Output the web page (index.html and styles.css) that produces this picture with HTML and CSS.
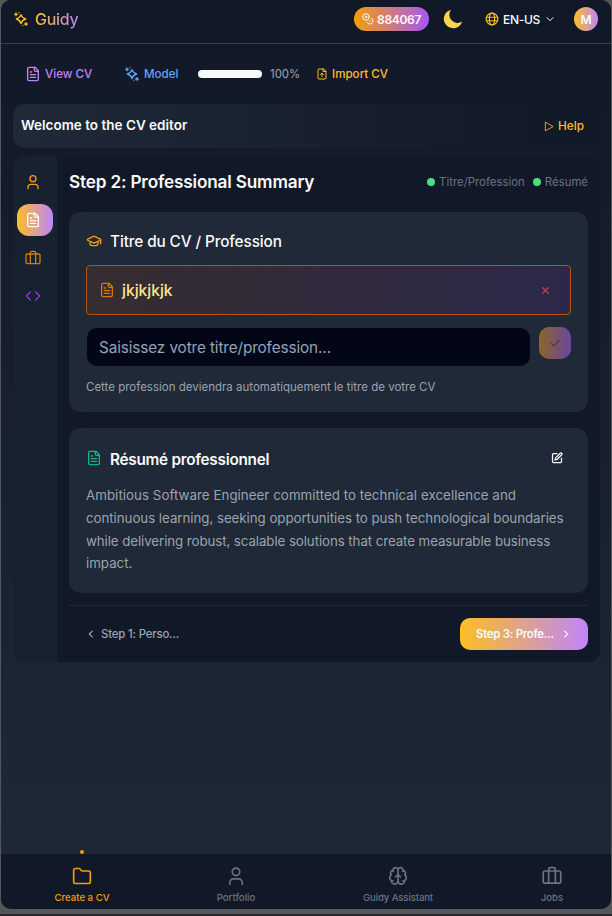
FILE: index.html
```html
<!DOCTYPE html>
<html lang="en">
<head>
<meta charset="utf-8">
<title>Guidy</title>
<link rel="stylesheet" href="styles.css">
</head>
<body>
<svg class="defs" width="0" height="0">
  <defs>
    <symbol id="file" viewBox="0 0 24 24"><path d="M15 2H6a2 2 0 0 0-2 2v16a2 2 0 0 0 2 2h12a2 2 0 0 0 2-2V7Z"/><path d="M14 2v4a2 2 0 0 0 2 2h4M10 9H8M16 13H8M16 17H8"/></symbol>
    <symbol id="sparkles" viewBox="0 0 24 24"><path d="M12 5.500Q13.500 10.500 19 12 13.500 13.500 12 19 10.500 13.500 5 12 10.500 10.500 12 5.500ZM4.500 3v4M2.500 5h4M19.500 17.500v4M17.500 19.500h4M9 2.500v.01M15 21.500v.01"/></symbol>
    <symbol id="user" viewBox="0 0 24 24"><circle cx="12" cy="7" r="4.500"/><path d="M19.500 22v-2a4.500 4.500 0 0 0-4.500-4.500H9A4.500 4.500 0 0 0 4.500 20v2"/></symbol>
    <symbol id="case" viewBox="0 0 24 24"><path d="M16 20V4a2 2 0 0 0-2-2h-4a2 2 0 0 0-2 2v16"/><rect x="1.500" y="6" width="21" height="14.500" rx="2"/></symbol>
  </defs>
</svg>
<div class="app">
  <header class="header">
    <div class="brand"><svg class="icon i16"><use href="#sparkles"/></svg><span class="brand-name">Guidy</span></div>
    <div class="header-tools">
      <div class="coins"><svg class="icon i12" viewBox="0 0 24 24"><circle cx="8" cy="8" r="6.500"/><circle cx="8" cy="8" r="1.500"/><path d="M19.500 10.500A6.500 6.500 0 1 1 10 19M16.500 14.500l.7.700-2 2"/></svg><span class="coins-value">884067</span></div>
      <svg class="moon" viewBox="0 0 20 20"><path d="M8 .7A9.400 9.400 0 1 0 19.200 12.600 8.300 8.300 0 0 1 8 .7Z"/></svg>
      <div class="language"><svg class="icon globe" viewBox="0 0 24 24"><circle cx="12" cy="12" r="10"/><ellipse cx="12" cy="12" rx="4.500" ry="10"/><path d="M2.500 9h19M2.500 15h19"/></svg><span class="language-name">EN-US</span><svg class="icon i8" viewBox="0 0 24 24"><path d="m3 8 9 9 9-9"/></svg></div>
      <div class="avatar">M</div>
    </div>
  </header>
  <div class="toolbar">
    <div class="tool view"><svg class="icon i16"><use href="#file"/></svg><span class="t-view">View CV</span></div>
    <div class="tool model"><svg class="icon i16"><use href="#sparkles"/></svg><span class="t-model">Model</span></div>
    <div class="progress"></div><span class="percent">100%</span>
    <div class="tool import"><svg class="icon i12" viewBox="0 0 24 24"><path d="M15 2H6a2 2 0 0 0-2 2v16a2 2 0 0 0 2 2h12a2 2 0 0 0 2-2V7ZM14 2v5h6M12 17v-6M9 13l3-3 3 3"/></svg><span class="t-import">Import CV</span></div>
  </div>
  <section class="banner"><span class="welcome">Welcome to the CV editor</span><div class="help"><svg class="icon play" viewBox="0 0 24 24"><path d="M4 2 22 12 4 22Z"/></svg><span class="t-help">Help</span></div></section>
  <main class="editor">
    <aside class="rail">
      <div class="rail-item amber"><svg class="icon i16"><use href="#user"/></svg></div>
      <div class="rail-item active"><svg class="icon i16"><use href="#file"/></svg></div>
      <div class="rail-item orange"><svg class="icon i16"><use href="#case"/></svg></div>
      <div class="rail-item purple"><svg class="icon i16" viewBox="0 0 24 24"><path d="m16 18 6-6-6-6M8 6l-6 6 6 6"/></svg></div>
    </aside>
    <div class="content">
      <div class="step-head"><h1 class="step-title">Step 2: Professional Summary</h1>
        <div class="checks"><i class="dot"></i><span class="check-a">Titre/Profession</span><i class="dot second"></i><span class="check-b">Résumé</span></div></div>
      <section class="card title-card">
        <div class="card-head amber"><svg class="icon i16" viewBox="0 0 24 24"><path d="M21.400 10.900a1 1 0 0 0 0-1.800l-8.600-3.900a2 2 0 0 0-1.700 0L2.600 9.100a1 1 0 0 0 0 1.800l8.600 3.900a2 2 0 0 0 1.700 0ZM22 10v6M6 12.500V16c0 4 12 4 12 0v-3.500"/></svg><h2 class="h-title">Titre du CV / Profession</h2></div>
        <div class="tag"><svg class="icon i16"><use href="#file"/></svg><span class="tag-name">jkjkjkjk</span><svg class="icon close" viewBox="0 0 24 24"><path d="M4 4l16 16M20 4 4 20"/></svg></div>
        <div class="entry"><div class="input"><span class="placeholder">Saisissez votre titre/profession...</span></div><div class="confirm"><svg class="icon i12" viewBox="0 0 24 24"><path d="m4 13 5 5L20 7"/></svg></div></div>
        <p class="hint"><span class="t-hint">Cette profession deviendra automatiquement le titre de votre CV</span></p>
      </section>
      <section class="card summary-card">
        <div class="card-head green"><svg class="icon i16"><use href="#file"/></svg><h2 class="h-summary">Résumé professionnel</h2><svg class="icon edit" viewBox="0 0 24 24"><path d="M12 3H5a2 2 0 0 0-2 2v14a2 2 0 0 0 2 2h14a2 2 0 0 0 2-2v-7M18.400 2.600a2.100 2.100 0 0 1 3 3l-9 9L8 16l1.300-4.300Z"/></svg></div>
        <p class="summary"><span class="l1">Ambitious Software Engineer committed to technical excellence and</span><br><span class="l2">continuous learning, seeking opportunities to push technological boundaries</span><br><span class="l3">while delivering robust, scalable solutions that create measurable business</span><br><span class="l4">impact.</span></p>
      </section>
      <footer class="steps">
        <div class="prev"><svg class="icon i10" viewBox="0 0 24 24"><path d="m15 19-7-7 7-7"/></svg><span class="t-prev">Step 1: Perso...</span></div>
        <div class="next"><span class="t-next">Step 3: Profe...</span><svg class="icon i10" viewBox="0 0 24 24"><path d="m9 5 7 7-7 7"/></svg></div>
      </footer>
    </div>
  </main>
  <nav class="nav">
    <div class="nav-item current"><svg class="icon i20" viewBox="0 0 24 24"><path d="M20 21a2 2 0 0 0 2-2V8a2 2 0 0 0-2-2h-8L9 3H4a2 2 0 0 0-2 2v14a2 2 0 0 0 2 2Z"/></svg><span class="n1">Create a CV</span></div>
    <div class="nav-item"><svg class="icon i20"><use href="#user"/></svg><span class="n2">Portfolio</span></div>
    <div class="nav-item"><svg class="icon i20" viewBox="0 0 24 24"><path d="M12 5a3 3 0 1 0-6 .1 4 4 0 0 0-2.500 5.800 4 4 0 0 0 .5 6.600A4 4 0 1 0 12 18ZM12 5a3 3 0 1 1 6 .1 4 4 0 0 1 2.500 5.800 4 4 0 0 1-.5 6.600A4 4 0 1 1 12 18ZM15 13a4.500 4.500 0 0 1-3-4 4.500 4.500 0 0 1-3 4M17.600 6.500a3 3 0 0 0 .4-1.400M6 5.100a3 3 0 0 0 .4 1.400M3.500 10.900l.5-.4M20 10.500l.5.4M6 18a4 4 0 0 1-2-.5M20 17.500a4 4 0 0 1-2 .5"/></svg><span class="n3">Guidy Assistant</span></div>
    <div class="nav-item"><svg class="icon i20"><use href="#case"/></svg><span class="n4">Jobs</span></div>
  </nav>
</div>
</body>
</html>
```
FILE: styles.css
```css
* { box-sizing: border-box; }
body { margin: 0; width: 612px; height: 916px; overflow: hidden; background: linear-gradient(#55565a 0 914px, #25272b 914px); font-family: Inter, "Open Sans", sans-serif; color: #f9fafb; }
h1, h2, p { margin: 0; font-weight: 600; }
span, h1, h2 { white-space: nowrap; }
.defs { position: absolute; }
.icon { fill: none; stroke: currentColor; stroke-width: 2; stroke-linecap: round; stroke-linejoin: round; flex: none; }
.i8 { width: 8px; height: 8px; stroke-width: 3; }
.i10 { width: 10px; height: 10px; stroke-width: 3; }
.i12 { width: 12px; height: 12px; }
.i16 { width: 16px; height: 16px; }
.i20 { width: 20px; height: 20px; }
.app { display: flex; flex-direction: column; width: 610px; height: 909px; margin-left: 1px; border-radius: 10px; overflow: hidden; background: linear-gradient(#111827, #1f2937); }
.header { display: flex; justify-content: space-between; align-items: center; flex: none; height: 44px; padding: 0 13px 5px 12px; background: #111827; border-bottom: 1px solid #374151; }
.brand { display: flex; align-items: center; gap: 6px; color: #fbbf24; }
.brand-name { font-size: 16px; letter-spacing: -.3px; font-weight: 500; background: linear-gradient(90deg, #fbbf24, #c084fc); background-clip: text; color: transparent; }
.header-tools { display: flex; align-items: center; }
.coins { display: flex; align-items: center; gap: 3px; width: 75px; height: 24px; padding-left: 8px; border-radius: 12px; background: linear-gradient(90deg, #f59e0b, #a855f7); }
.coins-value { font-size: 12px; letter-spacing: -.3px; font-weight: 600; }
.moon { width: 20px; height: 20px; margin-left: 14px; fill: #fcd34d; }
.language { display: flex; align-items: center; margin-left: 22px; width: 69px; }
.globe { width: 14px; height: 14px; color: #fbbf24; margin-right: 4px; }
.language-name { width: 43px; font-size: 12px; letter-spacing: -.3px; font-weight: 500; }
.avatar { display: flex; align-items: center; justify-content: center; width: 24px; height: 24px; margin-left: 20px; border-radius: 50%; background: linear-gradient(90deg, #fbbf24, #c084fc); font-size: 12px; font-weight: 600; }
.toolbar { display: flex; align-items: center; flex: none; height: 60px; padding-left: 24px; font-size: 11.600px; font-weight: 500; }
.tool { display: flex; align-items: center; gap: 4px; }
.view { width: 99px; color: #c084fc; }
.model { width: 74px; color: #60a5fa; }
.progress { width: 64px; height: 8px; border-radius: 4px; background: #f8fafc; }
.percent { margin-left: 8px; width: 46px; color: #9ca3af; font-size: 11.400px; font-weight: 400; }
.import { color: #fbbf24; }
.banner { display: flex; align-items: center; justify-content: space-between; flex: none; height: 44px; margin: 0 11px 8px 12px; padding: 0 16px 0 8px; border-radius: 12px; background: linear-gradient(90deg, #1f2937, #111827); }
.welcome { font-size: 13.500px; font-weight: 600; padding-bottom: 2px; }
.help { display: flex; align-items: center; gap: 4px; color: #fbbf24; font-size: 11.800px; font-weight: 500; }
.play { width: 10px; height: 11px; }
.editor { display: flex; flex: none; height: 506px; margin: 0 11px 0 12px; border-radius: 12px; overflow: hidden; background: #111827; }
.rail { display: flex; flex-direction: column; gap: 6px; width: 44px; padding: 10px 4px; background: #18212f; }
.rail-item { display: flex; align-items: center; justify-content: center; width: 36px; height: 32px; padding-right: 4px; border-radius: 12px; }
.active { background: linear-gradient(90deg, #fbbf24, #c084fc); color: #fff; }
.amber { color: #f59e0b; }
.orange { color: #d97706; }
.purple { color: #9333ea; }
.green { color: #10b981; }
.content { flex: 1; padding: 0 12px; }
.step-head { display: flex; align-items: center; justify-content: space-between; height: 56px; padding-bottom: 4px; }
.step-title { padding-bottom: 1px; font-size: 17.200px; letter-spacing: -.170px; }
.checks { display: flex; align-items: center; font-size: 11.400px; color: #6b7280; }
.dot { width: 8px; height: 8px; border-radius: 50%; margin-right: 4px; background: #4ade80; }
.second { margin-left: 8px; }
.card { padding: 17px; border-radius: 12px; background: #1f2937; }
.title-card { height: 200px; margin-bottom: 16px; }
.summary-card { height: 165px; margin-bottom: 12px; }
.card-head { display: flex; align-items: center; gap: 8px; height: 24px; }
.card-head h2 { font-size: 15.300px; color: #f9fafb; }
.card-head .h-title { font-weight: 500; letter-spacing: -.1px; }
.card-head .h-summary { padding-top: 2px; letter-spacing: -.260px; }
.summary-card .card-head { height: 26px; }
.edit { width: 12px; height: 12px; margin-left: auto; margin-right: 8px; color: #f9fafb; stroke-width: 2.500; }
.tag { display: flex; align-items: center; gap: 7px; height: 50px; margin-top: 12px; padding: 0 20px 0 12px; border: 1px solid #b45309; border-radius: 4px; background: linear-gradient(90deg, #352d30, #2d284a); color: #d97706; }
.tag-name { font-size: 15.600px; font-weight: 500; color: #fde68a; }
.close { width: 9px; height: 9px; margin-left: auto; color: #dc3545; stroke-width: 3; }
.entry { display: flex; gap: 9px; margin-top: 12px; padding-left: 1px; }
.input { display: flex; align-items: center; width: 443px; height: 38px; margin-top: 1px; padding: 1px 0 0 12px; border-radius: 10px; background: #020617; }
.placeholder { font-size: 15.300px; letter-spacing: -.110px; color: #94a3b8; }
.confirm { display: flex; align-items: center; justify-content: center; width: 32px; height: 32px; border-radius: 10px; background: linear-gradient(90deg, #8d6526, #6b46a0); color: #1f2937; }
.hint { height: 16px; line-height: 16px; margin-top: 13px; font-size: 11.500px; font-weight: 400; color: #9ca3af; }
.summary { margin-top: 13px; font-size: 13.300px; font-weight: 400; line-height: 22.750px; color: #9ca3af; }
.l1 { letter-spacing: .050px; }
.l2 { letter-spacing: -.040px; }
.l3 { letter-spacing: -.080px; }
.steps { display: flex; align-items: center; justify-content: space-between; height: 45px; padding-top: 12px; border-top: 1px solid #1f2937; font-size: 11.400px; letter-spacing: -.180px; }
.prev { display: flex; align-items: center; gap: 5px; padding-left: 17px; color: #9ca3af; font-weight: 500; }
.next { display: flex; align-items: center; gap: 7px; width: 128px; height: 32px; padding-left: 16px; border-radius: 10px; background: linear-gradient(90deg, #fbbf24, #c084fc); font-weight: 600; letter-spacing: -.260px; }
.nav { display: grid; grid-template-columns: 162px 146px 178px 130px; flex: none; height: 55px; margin-top: auto; background: #111827; }
.nav-item { position: relative; display: flex; flex-direction: column; align-items: center; gap: 6px; padding-top: 12px; font-size: 9.600px; font-weight: 500; color: #6b7280; }
.n3 { letter-spacing: -.130px; }
.current { color: #f59e0b; }
.current::before { content: ""; position: absolute; top: -4px; width: 4px; height: 4px; border-radius: 50%; background: #f59e0b; }
```
